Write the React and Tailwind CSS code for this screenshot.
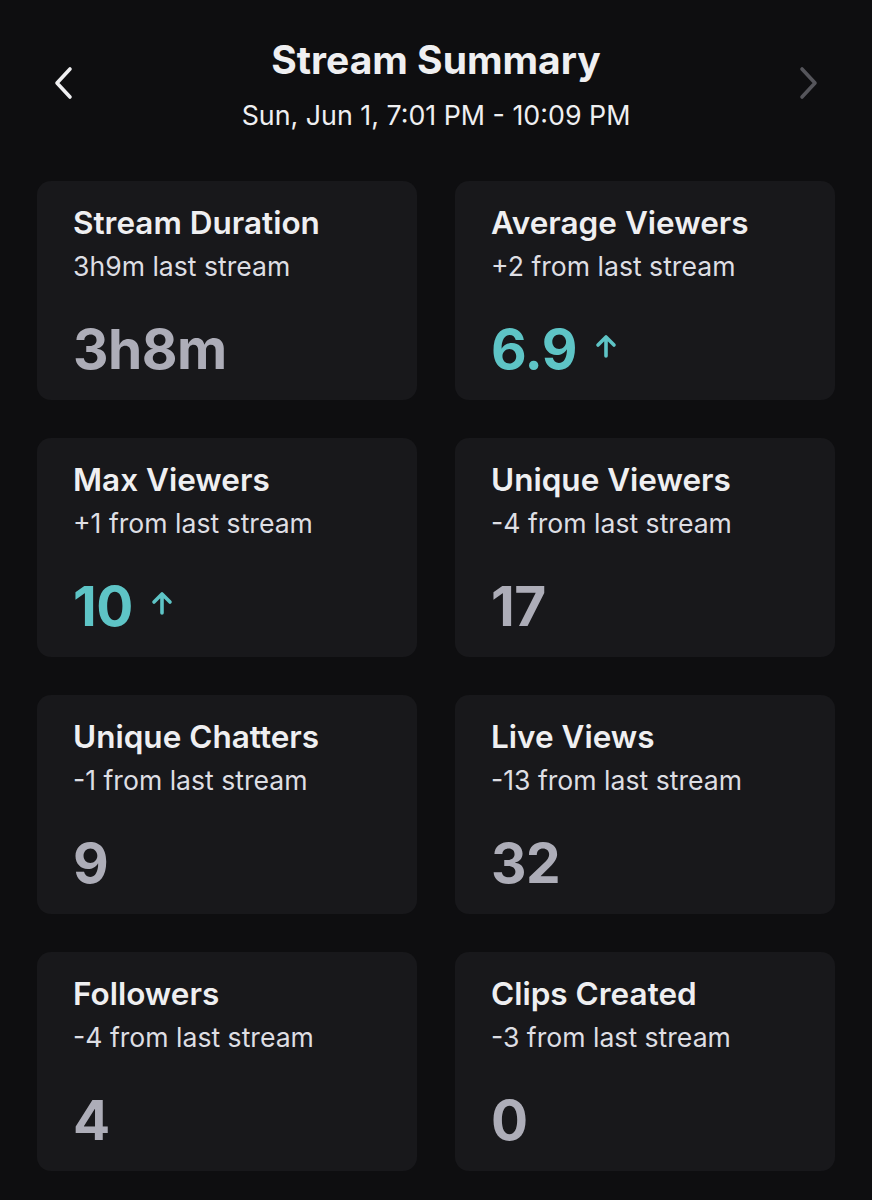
import React from 'react';

const stats = [
    { title: 'Stream Duration', sub: '3h9m last stream', value: '3h8m' },
    { title: 'Average Viewers', sub: '+2 from last stream', value: '6.9', up: true },
    { title: 'Max Viewers', sub: '+1 from last stream', value: '10', up: true },
    { title: 'Unique Viewers', sub: '-4 from last stream', value: '17' },
    { title: 'Unique Chatters', sub: '-1 from last stream', value: '9' },
    { title: 'Live Views', sub: '-13 from last stream', value: '32' },
    { title: 'Followers', sub: '-4 from last stream', value: '4' },
    { title: 'Clips Created', sub: '-3 from last stream', value: '0' },
];

const Chevron = ({ dir, className }) => (
    <svg width="22" height="34" viewBox="0 0 22 34" fill="none" className={className}>
        <path
            d={dir === 'left' ? 'M18 3 L5 17 L18 31' : 'M4 3 L17 17 L4 31'}
            stroke="currentColor"
            strokeWidth="3.6"
            strokeLinecap="round"
            strokeLinejoin="round"
        />
    </svg>
);

const UpArrow = () => (
    <svg width="22" height="24" viewBox="0 0 22 24" fill="none">
        <path d="M11 22 V3 M3 11 L11 3 L19 11" stroke="currentColor" strokeWidth="3.6" strokeLinecap="round" strokeLinejoin="round" />
    </svg>
);

const StatCard = ({ title, sub, value, up }) => (
    <div className="bg-[#18181b] rounded-[14px] h-[219px] pl-[36px] pt-[22px]">
        <div className="text-[31.5px] leading-[40px] font-semibold text-[#efeff1]">{title}</div>
        <div className="text-[26.6px] leading-[34px] text-[#dedee3] mt-[6px]">{sub}</div>
        <div className={`flex items-center mt-[34px] ${up ? 'text-[#5ec4c6]' : 'text-[#adadb8]'}`}>
            <span className="text-[55px] leading-[64px] font-bold tracking-[-0.5px]">{value}</span>
            {up && <span className="ml-[18px] mt-[-6px]"><UpArrow /></span>}
        </div>
    </div>
);

export default function App() {
    return (
        <div className="w-[872px] h-[1200px] bg-[#0e0e10] overflow-hidden" style={{ fontFamily: 'Inter, "Noto Sans", sans-serif' }}>
            {/* Header */}
            <div className="flex items-center justify-between px-[52px] pt-[22px] h-[181px] pb-[36px]">
                <Chevron dir="left" className="text-[#efeff1] mt-[-2px]" />
                <div className="flex flex-col items-center">
                    <div className="text-[39px] leading-[48px] font-bold text-[#efeff1]">Stream Summary</div>
                    <div className="text-[26.8px] leading-[34px] text-[#efeff1] mt-[14px]">Sun, Jun 1, 7:01 PM - 10:09 PM</div>
                </div>
                <Chevron dir="right" className="text-[#55555b] mt-[-2px]" />
            </div>

            {/* Stats grid */}
            <div className="grid grid-cols-2 gap-x-[38px] gap-y-[38px] px-[37px]">
                {stats.map((s) => (
                    <StatCard key={s.title} {...s} />
                ))}
            </div>
        </div>
    );
}
